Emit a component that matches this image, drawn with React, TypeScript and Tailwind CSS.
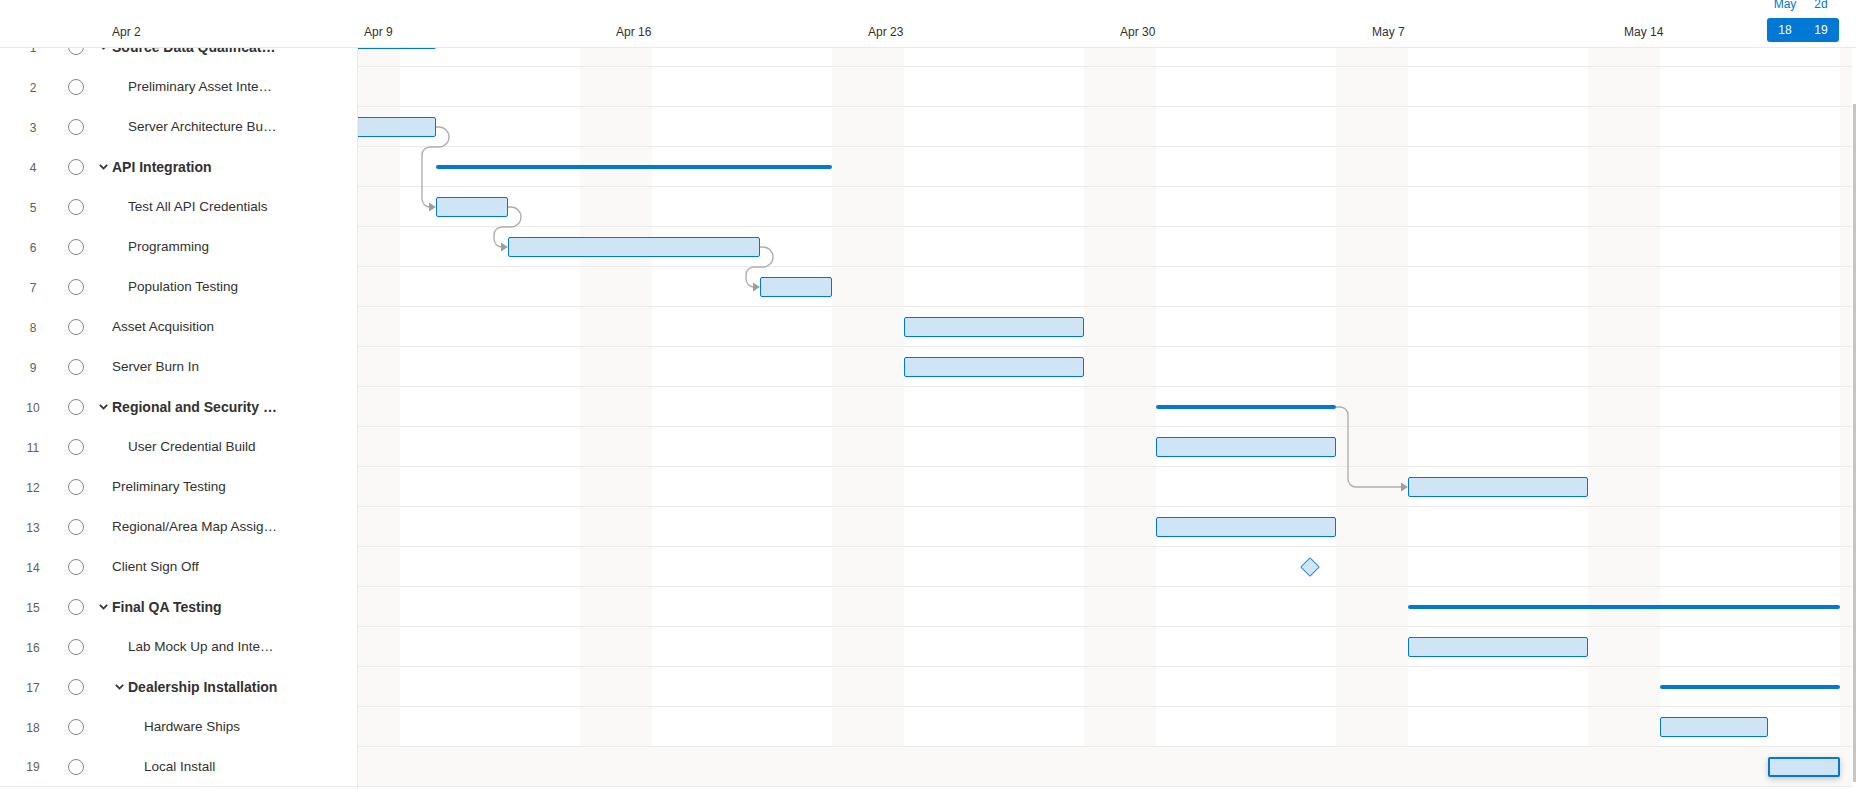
import React from 'react'

// timeline geometry (chart-local px): Sunday Apr 9 sits at x=6, one day = 36px
const DAY = 36
const X0 = 6
const dx = (n: number) => X0 + DAY * n
const ROW = 40
const cy = (i: number) => i * ROW + ROW / 2

type Task = {
  name: string
  level: number
  summary?: boolean
  kind?: 'bar' | 'summary' | 'milestone'
  from?: number
  to?: number
  at?: number
  selected?: boolean
}

const tasks: Task[] = [
  { name: 'Source Data Qualificati…', level: 0, summary: true, kind: 'summary', from: -10, to: 2 },
  { name: 'Preliminary Asset Inte…', level: 1 },
  { name: 'Server Architecture Bui…', level: 1, kind: 'bar', from: -3, to: 2 },
  { name: 'API Integration', level: 0, summary: true, kind: 'summary', from: 2, to: 13 },
  { name: 'Test All API Credentials', level: 1, kind: 'bar', from: 2, to: 4 },
  { name: 'Programming', level: 1, kind: 'bar', from: 4, to: 11 },
  { name: 'Population Testing', level: 1, kind: 'bar', from: 11, to: 13 },
  { name: 'Asset Acquisition', level: 0, kind: 'bar', from: 15, to: 20 },
  { name: 'Server Burn In', level: 0, kind: 'bar', from: 15, to: 20 },
  { name: 'Regional and Security …', level: 0, summary: true, kind: 'summary', from: 22, to: 27 },
  { name: 'User Credential Build', level: 1, kind: 'bar', from: 22, to: 27 },
  { name: 'Preliminary Testing', level: 0, kind: 'bar', from: 29, to: 34 },
  { name: 'Regional/Area Map Assig…', level: 0, kind: 'bar', from: 22, to: 27 },
  { name: 'Client Sign Off', level: 0, kind: 'milestone', at: 952 },
  { name: 'Final QA Testing', level: 0, summary: true, kind: 'summary', from: 29, to: 41 },
  { name: 'Lab Mock Up and Inte…', level: 1, kind: 'bar', from: 29, to: 34 },
  { name: 'Dealership Installation', level: 1, summary: true, kind: 'summary', from: 36, to: 41 },
  { name: 'Hardware Ships', level: 2, kind: 'bar', from: 36, to: 39 },
  { name: 'Local Install', level: 2, kind: 'bar', from: 39, to: 41, selected: true },
]

const weekends = [-1, 6, 13, 20, 27, 34, 41]
const weekLabels = ['Apr 2', 'Apr 9', 'Apr 16', 'Apr 23', 'Apr 30', 'May 7', 'May 14']
const indent = ['pl-0', 'pl-4', 'pl-8']

// finish-to-start link where successor starts at the same x (loop back)
function loopLink(x: number, y1: number, y2: number) {
  return `M ${x} ${y1} H ${x + 3} A 10 10 0 0 1 ${x + 3} ${y1 + 20} H ${x - 6} A 8 8 0 0 0 ${x - 14} ${y1 + 28} V ${y2 - 8} A 8 8 0 0 0 ${x - 6} ${y2} H ${x - 6}`
}

function Links() {
  const arrows: [number, number][] = [
    [dx(2), cy(4)],
    [dx(4), cy(5)],
    [dx(11), cy(6)],
    [dx(29), cy(11)],
  ]
  return (
    <svg className="absolute left-0 top-0 pointer-events-none" width={1500} height={760}>
      <g fill="none" stroke="#b1afad" strokeWidth={1.4}>
        <path d={loopLink(dx(2), cy(2), cy(4))} />
        <path d={loopLink(dx(4), cy(4), cy(5))} />
        <path d={loopLink(dx(11), cy(5), cy(6))} />
        <path
          d={`M ${dx(27)} ${cy(9)} H ${dx(27) + 4} A 8 8 0 0 1 ${dx(27) + 12} ${cy(9) + 8} V ${cy(11) - 8} A 8 8 0 0 0 ${dx(27) + 20} ${cy(11)} H ${dx(29) - 6}`}
        />
      </g>
      <g fill="#a19f9d">
        {arrows.map(([x, y], i) => (
          <polygon key={i} points={`${x - 7},${y - 4.5} ${x},${y} ${x - 7},${y + 4.5}`} />
        ))}
      </g>
    </svg>
  )
}

function Chevron() {
  return (
    <svg width="9" height="6" viewBox="0 0 9 6">
      <path d="M0.8 0.8 L4.5 4.6 L8.2 0.8" fill="none" stroke="#323130" strokeWidth="1.7" />
    </svg>
  )
}

function TaskRow({ t, i }: { t: Task; i: number }) {
  return (
    <div className={`flex items-center h-[40px] ${i === tasks.length - 1 ? 'border-b border-[#edebe9]' : ''}`}>
      <div className="w-[66px] text-center text-[12px] text-[#605e5c] pt-[1px]">{i + 1}</div>
      <div className="ml-[2px] w-[16px] h-[16px] rounded-full border border-[#8a8886] shrink-0" />
      <div className={`ml-[15px] flex items-center min-w-0 w-[180px] ${indent[t.level]}`}>
        <span className="w-[13px] shrink-0 flex items-center">{t.summary && <Chevron />}</span>
        <span
          className={`truncate pt-[1px] text-[#323130] ${t.summary ? 'font-bold text-[14px]' : 'text-[13.5px]'}`}
        >
          {t.name}
        </span>
      </div>
    </div>
  )
}

function ChartRow({ t }: { t: Task }) {
  return (
    <div className={`relative h-[40px] border-b border-[#edebe9] ${t.selected ? 'bg-[#faf9f8]' : ''}`}>
      {t.kind === 'bar' && (
        <div
          className={`absolute top-[10px] h-[20px] rounded-[2px] bg-[#cfe4f5] ${
            t.selected ? 'border-2 border-[#0078d4] shadow-[0_2px_6px_rgba(0,0,0,0.22)]' : 'border border-[#0078d4]'
          }`}
          style={{ left: dx(t.from!), width: dx(t.to!) - dx(t.from!) }}
        />
      )}
      {t.kind === 'summary' && (
        <div
          className="absolute top-[18px] h-[4px] rounded-full bg-[#0078d4]"
          style={{ left: dx(t.from!), width: dx(t.to!) - dx(t.from!) }}
        />
      )}
      {t.kind === 'milestone' && (
        <div
          className="absolute top-[13px] w-[14px] h-[14px] rotate-45 rounded-[1px] border border-[#2b88d8] bg-[#cfe4f5]"
          style={{ left: t.at! - 7 }}
        />
      )}
    </div>
  )
}

export default function App() {
  return (
    <div className="w-[1856px] h-[789px] overflow-hidden bg-white font-['Segoe_UI','Liberation_Sans',Arial,sans-serif] text-[#323130]">
      {/* timeline header */}
      <div className="relative h-[48px] border-b border-[#edebe9] overflow-hidden">
        {weekLabels.map((w, k) => (
          <span
            key={w}
            className="absolute top-[24px] text-[12px] leading-[16px] text-[#323130]"
            style={{ left: 112 + 252 * k }}
          >
            {w}
          </span>
        ))}
        <div className="absolute left-[1767px] top-[-4px] flex text-[12px] leading-[16px] text-[#0078d4]">
          <span className="w-[36px] text-center">May</span>
          <span className="w-[36px] text-center">2d</span>
        </div>
        <div className="absolute left-[1767px] top-[18px] h-[24px] w-[72px] rounded-[3px] bg-[#0078d4] flex items-center text-[12px] text-white">
          <span className="w-[36px] text-center">18</span>
          <span className="w-[36px] text-center">19</span>
        </div>
      </div>

      <div className="flex h-[741px]">
        {/* task grid */}
        <div className="w-[358px] shrink-0 border-r border-[#edebe9] overflow-hidden">
          <div className="-mt-[21px]">
            {tasks.map((t, i) => (
              <TaskRow key={i} t={t} i={i} />
            ))}
          </div>
        </div>

        {/* gantt chart */}
        <div className="flex-1 overflow-hidden">
          <div className="relative -mt-[21px]">
            {weekends.map((n) => (
              <div
                key={n}
                className="absolute top-0 h-[760px] bg-[#faf9f8]"
                style={{ left: dx(n), width: DAY * 2 }}
              />
            ))}
            {tasks.map((t, i) => (
              <ChartRow key={i} t={t} />
            ))}
            <Links />
          </div>
        </div>

        {/* scrollbar */}
        <div className="w-[4px] shrink-0 pt-[56px] pl-[1px]">
          <div className="w-[3px] h-[678px] bg-[#c8c6c4]" />
        </div>
      </div>
    </div>
  )
}
